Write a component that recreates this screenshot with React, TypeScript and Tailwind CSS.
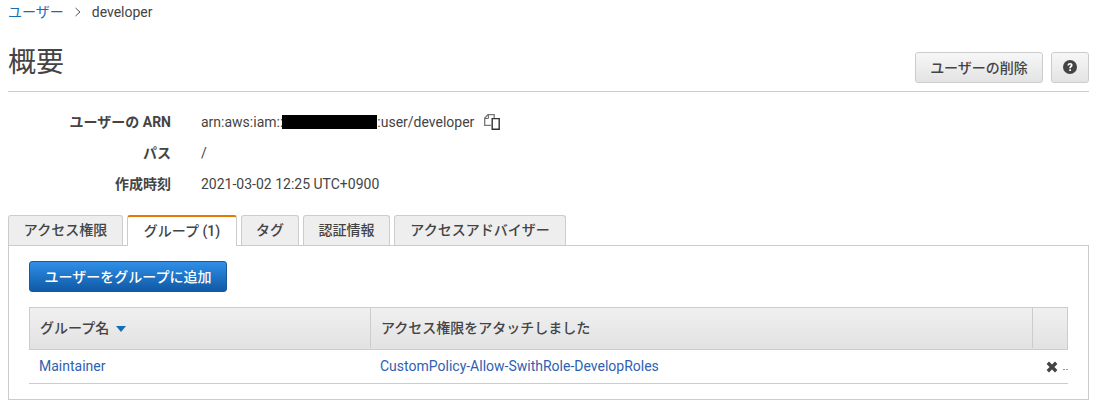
import React from "react";

function Copy() {
  return (
    <svg width="16" height="16" viewBox="0 0 16 16" fill="none" className="ml-[10px] mt-px">
      <path d="M7 11.4H.7V4L4 .7h6.2V4" stroke="#777" strokeWidth="1.3" />
      <path d="M4.4 .9v3.6H.9" stroke="#666" strokeWidth="1" />
      <path d="M8.2 4.6h7v10.7h-7z" stroke="#333" strokeWidth="1.4" />
    </svg>
  );
}

function Row({ label, children }: { label: string; children: React.ReactNode }) {
  return (
    <div className="flex h-[31px] items-center">
      <div className="w-[163px] text-right font-bold text-[#444]">{label}</div>
      <div className="ml-[30px] flex items-center text-[#444]">{children}</div>
    </div>
  );
}

function Tab({ label, active, w }: { label: string; active?: boolean; w: string }) {
  return active ? (
    <div className={`${w} relative z-10 -mb-px flex h-[31px] items-center justify-center rounded-t-[3px] border-x border-t-2 border-x-[#ccc] border-t-[#e07b00] bg-white pb-px font-medium text-[#444]`}>
      {label}
    </div>
  ) : (
    <div className={`${w} flex h-[30px] items-center justify-center rounded-t-[3px] border-x border-t border-[#ccc] bg-[#eee] pb-px font-medium text-[#444]`}>
      {label}
    </div>
  );
}

export default function App() {
  return (
    <div className="h-[403px] w-[1096px] overflow-hidden bg-white pl-2 pr-[7px] font-['Roboto','Noto_Sans_CJK_JP',sans-serif] text-[14px] leading-[20px] text-[#444]">
      <div className="flex h-[25px] items-center pb-px">
        <span className="text-[#146eb4]">ユーザー</span>
        <svg width="8" height="10" viewBox="0 0 8 10" fill="none" stroke="#555" strokeWidth="1" className="ml-[10px] mr-[10px]">
          <path d="M1.5 1l4.5 4-4.5 4" />
        </svg>
        <span>developer</span>
      </div>
      <div className="flex h-[67px] items-start justify-between border-b border-[#ccc]">
        <h1 className="mt-[20px] text-[28px] leading-[36px] text-[#444]">概要</h1>
        <div className="mt-[27px] flex gap-[8px]">
          <button className="flex h-[31px] w-[128px] items-center justify-center rounded-[3px] border border-[#ccc] bg-gradient-to-b from-[#f7f7f7] to-[#e3e3e3] font-medium text-[#444]">
            ユーザーの削除
          </button>
          <button className="flex h-[31px] w-[38px] items-center justify-center rounded-[3px] border border-[#ccc] bg-gradient-to-b from-[#f7f7f7] to-[#e3e3e3] pb-px">
            <svg width="14" height="14" viewBox="0 0 14 14">
              <circle cx="7" cy="7" r="7" fill="#444" />
              <path d="M4.5 5.4c0-1.5 1.1-2.3 2.6-2.3s2.5.9 2.5 2.1c0 1.7-1.7 1.7-1.7 3.1H6.2c0-2.2 1.6-2 1.6-3 0-.4-.3-.7-.8-.7s-.8.3-.9 1z" fill="#fff" />
              <rect x="6.2" y="9.3" width="1.8" height="1.7" fill="#fff" />
            </svg>
          </button>
        </div>
      </div>
      <div className="mt-[14px] flex flex-col">
        <Row label="ユーザーの ARN">
          <span>arn:aws:iam::</span>
          <span className="-ml-px inline-block h-[14px] w-[95px] bg-black" />
          <span>:user/developer</span>
          <Copy />
        </Row>
        <Row label="パス">/</Row>
        <Row label="作成時刻">2021-03-02 12:25 UTC+0900</Row>
      </div>
      <div className="mt-[16px] flex h-[30px] items-end gap-[4px]">
        <Tab label="アクセス権限" w="w-[115px]" />
        <Tab label="グループ (1)" active w="w-[110px]" />
        <Tab label="タグ" w="w-[58px]" />
        <Tab label="認証情報" w="w-[87px]" />
        <Tab label="アクセスアドバイザー" w="w-[172px]" />
      </div>
      <div className="h-[155px] border border-[#ccc] bg-white px-5 pt-[15px]">
        <button className="flex h-[31px] w-[198px] items-center justify-center rounded-[3px] border border-[#1a5a96] bg-gradient-to-b from-[#2f8fe8] to-[#0f5aa5] font-medium text-white">
          ユーザーをグループに追加
        </button>
        <div className="mt-[15px] w-[1039px]">
          <div className="flex h-[43px] border border-[#ccc] bg-gradient-to-b from-[#f0f0f0] to-[#e2e2e2] pb-px font-medium text-[#444]">
            <div className="flex w-[341px] items-center border-r border-[#ccc] pl-[10px]">
              グループ名
              <svg width="10" height="6" viewBox="0 0 10 6" className="ml-[7px] mt-[2px]">
                <path d="M0 0h10L5 6z" fill="#146eb4" />
              </svg>
            </div>
            <div className="flex w-[662px] items-center border-r border-[#ccc] pl-[10px]">アクセス権限をアタッチしました</div>
            <div className="flex-1" />
          </div>
          <div className="flex h-[34px] items-center border-b border-[#ccc] pb-0.5 text-[#2f5fb3]">
            <div className="w-[341px] shrink-0 pl-[10px]">Maintainer</div>
            <div className="w-[663px] shrink-0 pl-[10px]">CustomPolicy-Allow-SwithRole-DevelopRoles</div>
            <div className="flex flex-1 items-center justify-end text-[#444]">
              <svg width="12" height="12" viewBox="0 0 12 12" className="mt-[2px] shrink-0">
                <path d="M1.8 1.8l8.4 8.4M10.2 1.8l-8.4 8.4" stroke="#444" strokeWidth="3.4" />
              </svg>
              <span className="ml-[5px] mt-[8px] flex h-px w-[5px] shrink-0 justify-between">
                <span className="h-px w-[2px] bg-[#999]" />
                <span className="h-px w-[2px] bg-[#8aa]" />
              </span>
            </div>
          </div>
        </div>
      </div>
    </div>
  );
}
